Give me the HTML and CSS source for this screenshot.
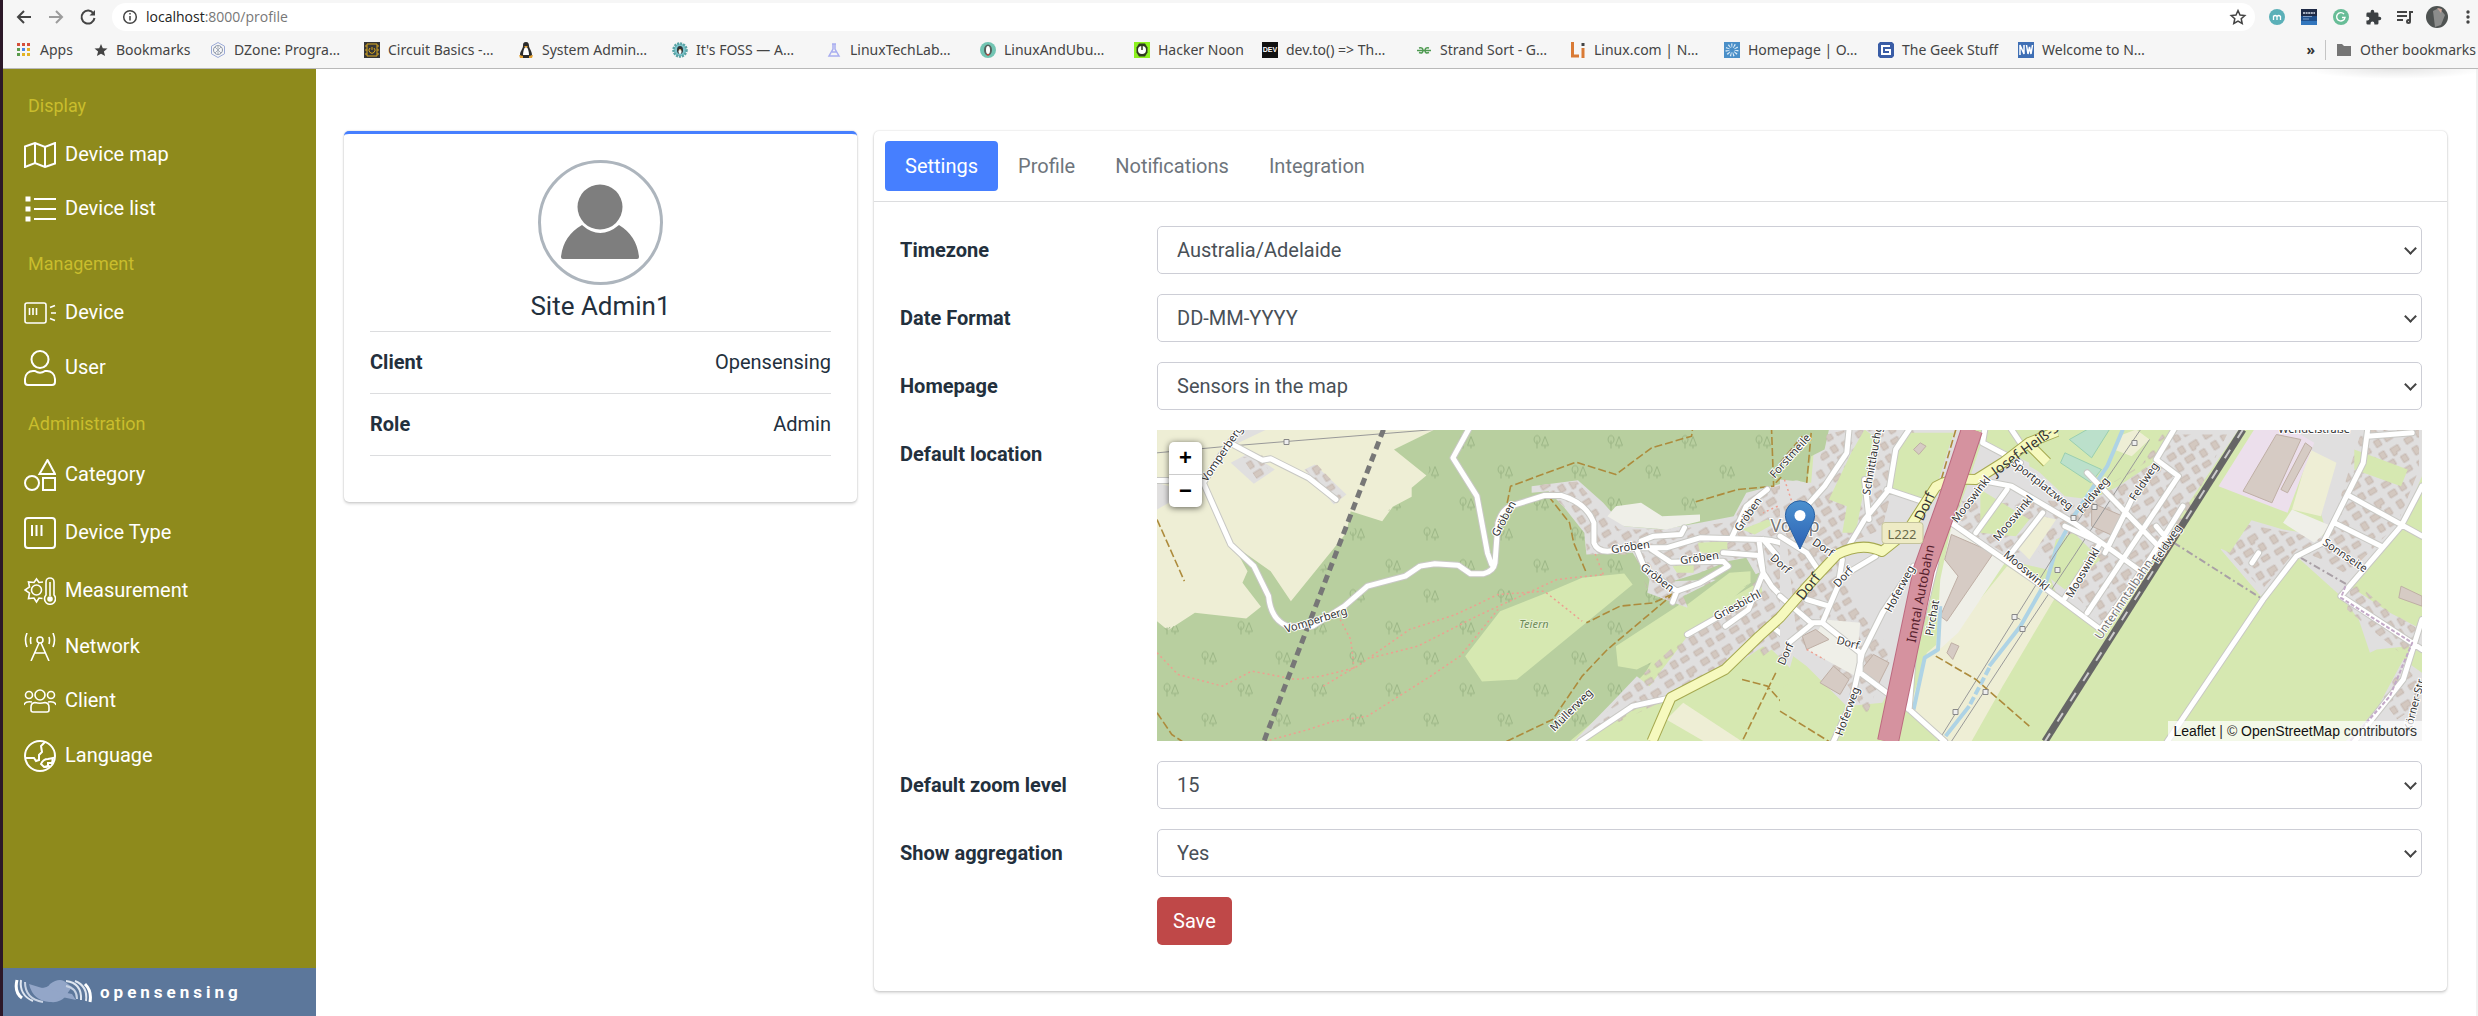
FILE: index.html
```html
<!DOCTYPE html>
<html lang="en">
<head>
<meta charset="utf-8">
<title>Profile</title>
<link rel="stylesheet" href="styles.css">
</head>
<body>
<header class="browser">
  <div class="toolbar">
    <button class="tool" aria-label="Back"><svg width="18" height="18" viewBox="0 0 18 18" class="ln"><path d="M16 9H3M9 3L3 9l6 6"/></svg></button>
    <button class="tool faded" aria-label="Forward"><svg width="18" height="18" viewBox="0 0 18 18" class="ln"><path d="M2 9h13M9 3l6 6-6 6"/></svg></button>
    <button class="tool" aria-label="Reload"><svg width="18" height="18" viewBox="0 0 18 18" class="ln"><path d="M14.500 5.500A6.500 6.500 0 1 0 15.500 10"/><path d="M16 2v5.500h-5.500z" fill="#444" stroke="none"/></svg></button>
    <div class="omnibox">
      <svg width="16" height="16" viewBox="0 0 16 16" class="ln thin"><circle cx="8" cy="8" r="6.300"/><path d="M8 7v4.500M8 4v1.600"/></svg>
      <span class="url"><b>localhost</b>:8000/profile</span>
      <svg width="18" height="18" viewBox="0 0 18 18" class="ln thin"><path d="M9 2.500l2 4.500 4.800.5-3.600 3.200 1 4.800L9 13l-4.200 2.500 1-4.800L2.200 7.500 7 7z"/></svg>
    </div>
    <button class="tool" aria-label="m extension"><svg width="16" height="16" viewBox="0 0 16 16"><circle cx="8" cy="8" r="8" fill="#5bb0b8"/><path d="M4.500 11V6.500M4.500 7.500q1.700-2 3.500 0V11M8 7.500q1.700-2 3.500 0V11" fill="none" stroke="#fff" stroke-width="1.300"/></svg></button>
    <button class="tool" aria-label="Dictionary"><svg width="16" height="16" viewBox="0 0 16 16"><path d="M0 0h16v16H0z" fill="#1f2b47"/><path d="M0 7h16v9H0z" fill="#20508c"/><path d="M0 12h16v4H0z" fill="#3276bd"/><path d="M2 4h12" stroke="#a9b2c2" stroke-width="2" stroke-dasharray="2 .6"/><path d="M2 7.500h9M2 10h6" stroke="#7d9cc6"/></svg></button>
    <button class="tool" aria-label="Grammar"><svg width="16" height="16" viewBox="0 0 16 16"><circle cx="8" cy="8" r="8" fill="#68bd97"/><path d="M11 5a4.200 4.200 0 1 0 1 3.500H9" fill="none" stroke="#fff" stroke-width="1.400"/></svg></button>
    <button class="tool" aria-label="Extensions"><svg width="17" height="17" viewBox="0 0 24 24"><path fill="#3c4043" d="M20.500 11H19V7a2 2 0 0 0-2-2h-4V3.500a2.500 2.500 0 0 0-5 0V5H4a2 2 0 0 0-2 2v3.800h1.500a2.700 2.700 0 0 1 0 5.400H2V20a2 2 0 0 0 2 2h3.800v-1.500a2.700 2.700 0 0 1 5.400 0V22H17a2 2 0 0 0 2-2v-4h1.500a2.500 2.500 0 0 0 0-5z"/></svg></button>
    <button class="tool" aria-label="Media"><svg width="18" height="18" viewBox="0 0 18 18" class="ln"><path d="M1 4h10M1 8h10M1 12h6M14 13V4h3"/><circle cx="12.500" cy="13.500" r="1.500"/></svg></button>
    <button class="tool" aria-label="Account"><svg width="22" height="22" viewBox="0 0 22 22"><circle cx="11" cy="11" r="11" fill="#4f5352"/><path d="M7 5l6-3 6 7-4 10-6 2z" fill="#8b8c8b"/><path d="M11 2l5 1-1 4z" fill="#c9a59a"/></svg></button>
    <button class="tool last" aria-label="Menu"><svg width="6" height="18" viewBox="0 0 6 18" fill="#444"><circle cx="3" cy="4" r="1.700"/><circle cx="3" cy="9" r="1.700"/><circle cx="3" cy="14" r="1.700"/></svg></button>
  </div>
  <nav class="bookmarks">
    <a href="#" class="bm bm-apps"><svg width="16" height="16" viewBox="0 0 16 16"><path fill="#d5503b" d="M1 1h3v3H1zM6 1h3v3H6zM11 1h3v3h-3z"/><path fill="#5b9b4c" d="M1 6h3v3H1zM1 11h3v3H1z"/><path fill="#4a86e8" d="M6 6h3v3H6z"/><path fill="#e3b326" d="M11 6h3v3h-3zM6 11h3v3H6zM11 11h3v3h-3z"/></svg>Apps</a>
    <a href="#" class="bm bm-own"><svg width="14" height="16" viewBox="0 0 14 16"><path fill="#444" d="M7 2l1.800 4.200 4.700.4-3.600 3 1.200 4.500L7 11.700l-4.100 2.400L4.100 9.600.5 6.600l4.700-.4z"/></svg>Bookmarks</a>
    <a href="#" class="bm"><svg width="16" height="16" viewBox="0 0 16 16" fill="none" stroke="#9aa9d6"><path d="M8 .5l6.500 3.700v7.600L8 15.500l-6.500-3.700V4.200z"/><circle cx="8" cy="8" r="4.500" stroke="#8c96a8"/><path d="M5 5l6 6M11 5l-6 6M8 3v10" stroke="#a5adb9"/></svg>DZone: Progra…</a>
    <a href="#" class="bm"><svg width="16" height="16" viewBox="0 0 16 16"><path fill="#363636" d="M0 0h16v16H0z"/><path fill="none" stroke="#d8a820" d="M3 2h10v12H3zM1 4h2M1 8h2M1 12h2M13 4h2M13 8h2M13 12h2M6 6a3 3 0 1 0 4 0M8 5v3"/></svg>Circuit Basics -…</a>
    <a href="#" class="bm"><svg width="16" height="16" viewBox="0 0 16 16"><path fill="#2c2c2c" d="M8 0c2.500 0 3 2 3 4s3 5 3 9l-2 3H4l-2-3c0-4 3-6 3-9s.5-4 3-4z"/><path fill="#fff" d="M8 5c2 0 3 5 3 8H5c0-3 1-8 3-8z"/><path fill="#e3a02f" d="M6 4h4L8 6zM1 13l4 1v2H2zM15 13l-4 1v2h3z"/></svg>System Admin…</a>
    <a href="#" class="bm"><svg width="16" height="16" viewBox="0 0 16 16"><circle cx="8" cy="8" r="6.500" fill="#7cc4cc" stroke="#59a3a4" stroke-width="2.500" stroke-dasharray="2 1"/><ellipse cx="8" cy="8" rx="3" ry="4" fill="#2e3133"/><ellipse cx="8" cy="9.500" rx="1.500" ry="2.500" fill="#fff"/><path d="M7 7h2L8 9z" fill="#e8a33b"/></svg>It's FOSS — A…</a>
    <a href="#" class="bm"><svg width="16" height="16" viewBox="0 0 16 16" fill="none" stroke="#a9aef0" stroke-width="1.500"><path d="M6 2h4M7 2v5l-4 7h10L9 7V2M6 10h5"/></svg>LinuxTechLab…</a>
    <a href="#" class="bm"><svg width="16" height="16" viewBox="0 0 16 16"><circle cx="8" cy="8" r="8" fill="#72c5b3"/><ellipse cx="8" cy="8" rx="4" ry="5.500" fill="#56605c"/><ellipse cx="8" cy="8" rx="2" ry="4" fill="#fff"/><path d="M6 12h4l-2 2z" fill="#c2443a"/></svg>LinuxAndUbu…</a>
    <a href="#" class="bm bm-noon"><svg width="16" height="16" viewBox="0 0 16 16"><path fill="#8df21e" d="M0 0h16v16H0z"/><path d="M5 1.500h6l2.500 4v5l-2.500 4H5l-2.500-4v-5z" fill="#2f3b20"/><circle cx="8" cy="8" r="4" fill="#fff"/><path d="M8 3v5" stroke="#2f3b20" stroke-width="1.500"/></svg>Hacker Noon</a>
    <a href="#" class="bm"><span class="dev">DEV</span>dev.to() =&gt; Th…</a>
    <a href="#" class="bm"><svg width="16" height="16" viewBox="0 0 16 16" fill="none" stroke="#4e9a51" stroke-width="1.500"><path d="M3 6q4-1 4 2.500Q7 12 3 10.500M13 6q-4-1-4 2.500Q9 12 13 10.500M1 8.500h14"/></svg>Strand Sort - G…</a>
    <a href="#" class="bm"><svg width="16" height="16" viewBox="0 0 16 16" stroke="#d97a35" stroke-width="3" fill="none"><path d="M2.500 0v14H9M13 6v10"/><path d="M13 1v3" stroke="#444"/></svg>Linux.com | N…</a>
    <a href="#" class="bm"><svg width="16" height="16" viewBox="0 0 16 16"><path fill="#4a8fc8" d="M0 0h16v16H0z"/><circle cx="8" cy="8" r="4.500" fill="none" stroke="#dcecf8" stroke-width="4" stroke-dasharray="1 1.500"/></svg>Homepage | O…</a>
    <a href="#" class="bm bm-geek"><svg width="16" height="16" viewBox="0 0 16 16"><path fill="#3a5da6" d="M0 2l2-2h12l2 2v12l-2 2H2l-2-2z"/><path d="M12 4H4v8h8V8H7" fill="none" stroke="#fff" stroke-width="2"/></svg>The Geek Stuff</a>
    <a href="#" class="bm"><svg width="16" height="16" viewBox="0 0 16 16"><path fill="#3f6fb5" d="M0 0h16v16H0z"/><path d="M2 13V3l4 9V3M8.500 3l1.500 9 1.500-7 1.500 7 1.500-9" fill="none" stroke="#fff" stroke-width="1.500"/></svg>Welcome to N…</a>
    <button class="more" aria-label="More bookmarks">»</button>
    <a href="#" class="bm bm-other"><svg width="16" height="16" viewBox="0 0 16 16"><path fill="#757575" d="M1 2h5l2 2h7v10H1z"/></svg>Other bookmarks</a>
  </nav>
</header>

<div class="app">
  <aside class="sidebar">
    <nav class="menu">
      <h2>Display</h2>
      <a href="#"><svg width="32" height="26" viewBox="0 0 32 26"><path d="M1 4.500L11 1l10 4 10-4v20.500L21 25l-10-4L1 25zM11 1v20M21 5v20"/></svg><span>Device map</span></a>
      <a href="#"><svg width="32" height="28" viewBox="0 0 32 28"><path d="M10 4h22M10 14h22M10 24h22"/><path d="M1.500 1.500h5v5h-5zM1.500 11.500h5v5h-5zM1.500 21.500h5v5h-5z" fill="#fff" stroke="none"/></svg><span>Device list</span></a>
      <h2>Management</h2>
      <a href="#"><svg width="32" height="22" viewBox="0 0 32 22" class="fine"><rect x="1" y="1" width="21" height="20" rx="2"/><path d="M5.500 6v7M9 6v7M12.500 6v7M26 5.500l5-2M27 11h5M26 16.500l5 2"/></svg><span>Device</span></a>
      <a href="#" class="mid"><svg width="32" height="36" viewBox="0 0 32 36"><circle cx="16" cy="9.500" r="8.500"/><path d="M1 32v-3c0-5 4-8 8-8h2c3 2 7 2 10 0h2c4 0 8 3 8 8v3q0 3-3 3H4q-3 0-3-3z"/></svg><span>User</span></a>
      <h2>Administration</h2>
      <a href="#" class="tall"><svg width="32" height="32" viewBox="0 0 32 32"><circle cx="8" cy="24" r="7"/><path d="M19 19h12v12H19zM23.500 1l7.500 14H15.500z"/></svg><span>Category</span></a>
      <a href="#" class="tall"><svg width="32" height="32" viewBox="0 0 32 32"><rect x="1" y="1" width="30" height="30" rx="3"/><path d="M8 8v11M12.500 8v11M17.500 8v11"/></svg><span>Device Type</span></a>
      <a href="#" class="tall"><svg width="32" height="28" viewBox="0 0 32 28" class="fine"><circle cx="12.500" cy="13" r="5"/><path d="M19 5l-4 .5L12.500 2 10 5.500 4.500 5l1 5L1 13l4.500 3-1 5.500 5.500-.5 2.500 4 2.500-4 3.500.5"/><path d="M22 18V5a4 4 0 0 1 8 0v13a5.500 5.500 0 1 1-8 0zM26 5v14"/><circle cx="26" cy="22" r="2" fill="#fff"/></svg><span>Measurement</span></a>
      <a href="#"><svg width="32" height="28" viewBox="0 0 32 28" class="fine"><circle cx="16" cy="7" r="3"/><path d="M15 10L7 28M17 10l8 18M11 20h10M3 0q-3 7 0 14M29 0q3 7 0 14M7 4q-1 3 0 7M25 4q1 3 0 7"/></svg><span>Network</span></a>
      <a href="#"><svg width="32" height="24" viewBox="0 0 32 24" class="fine"><circle cx="16" cy="6" r="5"/><circle cx="5" cy="6" r="3.500"/><circle cx="27" cy="6" r="3.500"/><path d="M7 21v-3q0-4 4-4.500 5 1.500 10 0 4 .5 4 4.500v3q0 2-2 2H9q-2 0-2-2zM0 16q1-4 8-3M32 16q-1-4-8-3"/></svg><span>Client</span></a>
      <a href="#" class="mid"><svg width="32" height="32" viewBox="0 0 32 32"><circle cx="16" cy="16" r="15"/><path d="M21 2l-4 4 1 6-3 3v5l-3 1-2-3H2M17 24q2-5 7-5l5-1-1 5h-4v3l-4 1zM22 27l4-1"/></svg><span>Language</span></a>
    </nav>
    <footer class="brand">
      <svg width="78" height="26" viewBox="0 0 78 26"><path d="M26 9q8 0 10-4 8-6 14-3l8 6q-4 5-6 9-6 7-15 6-9-1-11-14z" fill="#93a6c8"/><path d="M15 5l13 4 30 6 4 6-14-3-12 5q-17-1-21-18z" fill="#93a6c8"/><g fill="none" stroke="#fff" stroke-width="2"><path d="M3 1q-3 12 5 18" stroke-width="3"/><path d="M7 1q-2 15 12 21" stroke="#dfe6f0"/><path d="M11 3q0 17 18 20" stroke="#c8d3e4"/><path d="M71 5q7 7 5 18" stroke-width="3"/><path d="M61 2q13 5 11 20" stroke="#dfe6f0"/><path d="M52 2q16 2 15 19" stroke="#dfe6f0"/><path d="M52 7q11 2 11 13" stroke="#c8d3e4"/></g></svg>
      <span>opensensing</span>
    </footer>
  </aside>

  <main class="content">
    <section class="card person">
      <svg class="avatar" viewBox="0 0 119 119"><circle cx="59" cy="44" r="22.500" fill="#7e7e7e"/><path fill="#7e7e7e" d="M41 62q18 16 37 0 18 11 20 32 0 2-2 2H22q-2 0-2-2 2-21 21-32z"/></svg>
      <h1>Site Admin1</h1>
      <dl>
        <div><dt>Client</dt><dd>Opensensing</dd></div>
        <div><dt>Role</dt><dd>Admin</dd></div>
      </dl>
    </section>

    <section class="card settings">
      <div class="tabs" role="tablist">
        <button role="tab" class="active" aria-selected="true">Settings</button>
        <button role="tab">Profile</button>
        <button role="tab">Notifications</button>
        <button role="tab">Integration</button>
      </div>
      <form class="form" onsubmit="return false">
        <label for="tz">Timezone</label>
        <div class="field"><select id="tz"><option>Australia/Adelaide</option></select></div>
        <label for="df">Date Format</label>
        <div class="field"><select id="df"><option>DD-MM-YYYY</option></select></div>
        <label for="hp">Homepage</label>
        <div class="field"><select id="hp"><option>Sensors in the map</option></select></div>
        <span class="label">Default location</span>
        <div class="map">
          <svg class="tiles" viewBox="0 0 1265 312" preserveAspectRatio="xMidYMid slice">
            <defs>
              <pattern id="trees" width="74" height="62" patternUnits="userSpaceOnUse">
                <path fill="none" stroke="#9bb585" d="M10 19v-8M10 14a3 4 0 1 1 .1 0M18 19v-3M14.500 16L18 7l3.500 9zM48 49v-8M48 44a3 4 0 1 1 .1 0M56 49v-3M52.500 46l3.500-9 3.500 9z"/>
              </pattern>
              <pattern id="houses" width="42" height="37" patternUnits="userSpaceOnUse" patternTransform="rotate(-32)">
                <path fill="#d3c8c0" stroke="#bfafa5" stroke-width=".7" d="M2 3h8v6H2zM15 2h6v7h-6zM27 4h9v6h-5v2h-4zM4 15h6v8H4zM16 14h9v6h-9zM32 16h6v7h-6zM1 29h9v5H1zM17 26h6v7h-6zM28 28h8v5h-8z"/>
              </pattern>
              <linearGradient id="pinfill" x2="0" y2="1"><stop stop-color="#4b90cf"/><stop offset="1" stop-color="#2c62b4"/></linearGradient>
              <path id="west" vector-effect="non-scaling-stroke" d="M220 75L290 122 310 118 400 175 465 240M235 30L190 110 150 190 215 375 270 440 305 530Q310 600 350 620L410 620 485 560 540 500 630 470 665 440 700 433 755 437 785 463H815Q840 455 843 430L850 310Q860 270 880 260L960 228H1000Q1060 250 1078 310V370Q1085 395 1110 395L1180 385 1250 385 1330 355 1480 360Q1530 365 1568 400M780 30L743 115 800 230 825 400 835 435M40 183H65M1180 390L1200 450 1275 515 1265 548M1275 515L1330 490 1397 440 1385 425 1260 428 1215 390M1190 365L1220 350 1285 345 1293 325M1385 400L1470 408 1480 460 1445 570 1390 620M1470 530L1390 580 1300 645M1405 355L1440 260 1490 210M1470 360L1480 460 1500 500 1568 590M1045 966L1170 860 1260 835M1500 620L1545 665 1568 640M1480 360L1568 490"/>
              <path id="east" vector-effect="non-scaling-stroke" d="M155 30L150 100 100 200 60 260M290 30L260 90 245 210 190 300 150 390M240 210L330 250M200 300L190 180M385 310L590 500 720 630M400 170L520 200 660 310 805 450M510 210L440 340M590 280L520 400M885 30L845 120 895 170 760 440 690 580M640 320L720 370 640 535M790 240L730 400M690 160L850 380M905 260L830 420 720 630M845 320L870 360M1320 30L1310 130 1220 370 1160 410 1085 540 870 966M1420 40L1320 50M1442 200L1395 320 1260 530M1280 230L1442 350M1245 310L1350 380M1260 530L1442 690M1442 600L1400 780 1290 966M1060 430L1075 400M0 350L60 400 85 450M140 420L130 500 95 610 180 700 180 760 290 870 370 966M215 410L140 470M0 530L70 610H95M60 540L110 560M20 670L75 610M300 440L230 580 185 700 160 850 120 966M350 430L300 700 290 870M460 30L455 70 540 130M520 30L540 70"/>
              <path id="trunk" d="M495 312L514 268 568 240 602 207 623 188 650 157 680 125Q705 112 725 122L750 102 779 57Q792 48 819 50L846 33 872 13 900 2M872 15L890 33"/>
            </defs>
            <path fill="#d6e8b1" d="M0 0h1265v312H0z"/>
            <!-- western half -->
            <g transform="translate(-16.800 -10) scale(.4209 .3333)">
              <path fill="#b8cf9f" d="M40 30H1568V230L1480 480 1250 650 1200 760 1130 850 1020 966H40z"/>
              <path fill="#eeeed5" d="M40 30H700L603 90 680 168 645 205V232L600 262 575 305 500 275 490 340 358 545 310 455 220 375 255 455 243 490 287 562 252 597 130 580 66 632 40 605z"/>
            </g>
            <path fill="url(#trees)" d="M275 0H640V70L600 150 510 205 470 275 412 312H0V200L40 192 100 185 140 170 195 100 270 60z"/>
            <g transform="translate(-16.800 -10) scale(.4209 .3333)">
              <path fill="#d6e8b1" d="M772 710L855 575 975 515 1050 475 1150 462 1170 495 895 780 812 786zM1130 680L1300 540 1420 450H1455L1450 490 1260 700 1180 750 1135 740z"/>
              <path fill="#e0dfdf" d="M930 200L1040 182 1100 250 1150 320 1240 330 1330 310 1410 290 1440 220 1530 190 1568 180V640L1540 760 1480 680 1400 750 1270 830 1200 860 1140 880 1060 966H1030L1120 850 1180 770 1210 800 1300 650 1480 530 1470 460 1300 565 1205 520 1210 480 1170 400 1060 405 1055 340 1005 260 970 215 930 220zM215 130L260 100 320 150 270 193zM390 150L415 135 490 225 460 255zM40 190L68 200V250L40 270zM235 30H300L225 75z"/>
            </g>
            <path fill="url(#houses)" d="M375 56L420 52 462 100 520 100 575 92 592 65 643 50V205L628 235 600 225 520 265 425 310 480 250 530 205 603 165 590 148 525 178 490 160 478 125 430 125 428 102 405 75zM85 28L105 25 113 45 100 50zM148 40L160 35 188 65 180 72z"/>
            <g transform="translate(-16.800 -10) scale(.4209 .3333)" class="geo">
              <path fill="#efefe8" d="M1110 290L1130 260 1190 250 1240 290 1330 285V305L1250 330 1150 320z"/>
              <path fill="#b8cf9f" d="M1265 485L1330 460 1395 425 1440 415 1465 470 1440 500 1400 510 1300 560 1290 530 1370 480z"/>
              <path fill="#d6e8b1" d="M1325 370L1395 365V400H1330zM1265 440L1315 430V460H1275zM1300 555L1400 460 1450 455V490L1380 545 1300 580zM1430 330L1490 300 1510 310 1460 345zM1470 720L1500 690 1540 740 1568 780V966H1430L1290 850 1400 750z"/>
              <path fill="#eeeed5" d="M1290 850L1430 966H1340L1250 900z"/>
              <path class="brown" d="M872 250L880 200 1035 128 1130 165 1215 85 1310 50 1312 30M970 230L1020 310 1030 370 1060 460M870 966L980 900 1050 770 1110 690 1270 520 1220 550 1140 560 1060 610M40 300L105 485M1320 247L1420 210 1505 200 1500 30M1510 190L1568 110M40 880L75 945 100 966M1430 780L1490 800 1568 910M1510 760L1430 966"/>
              <path class="pink" d="M40 700L90 765 195 800 265 755 370 780 430 770 510 745 640 630 750 585 850 525 960 515 1050 605M475 600L500 660 508 745 435 800M550 715L660 680 800 590 990 480 1100 465M296 966L400 930 460 905 540 890 690 770 760 710 850 570M1100 465L1080 400M1530 190L1550 240 1480 280"/>
              <path class="power" d="M40 100L210 80 700 30"/>
              <use href="#west" class="road-c"/><use href="#west" class="road"/>
              <path class="border" d="M578 30L300 945 294 966"/>
            </g>
            <!-- eastern half -->
            <g transform="translate(623 -10) scale(.4452 .3333)" class="geo">
              <path fill="#e0dfdf" d="M0 180L70 190 80 30H420L360 320 250 800 230 850 150 860 60 740 0 680zM455 60L560 130 640 230 700 240 760 200 850 120 880 30H1030L720 640 620 520 600 450 500 420 390 310 420 200zM1160 30H1442V170L1395 320 1280 500 1370 580 1442 630V700L1410 680 1340 690 1325 700 1300 600 1260 530 1160 410 1080 530 990 390 1040 295 1130 330 1230 350zM1340 870L1400 720 1442 760V966H1270z"/>
              <path fill="#b8cf9f" d="M0 30H110L100 90 70 110 60 190 0 170z"/>
            </g>
            <path fill="url(#houses)" d="M626 75L655 55 670 5 690 0H760L740 40 725 100 700 110 680 130 700 180 735 220 710 285 680 240 640 210zM795 70L830 75 885 70 920 75 985 35 1005 5H1070L1035 75 1015 110 945 195 895 140 880 120 850 125 800 95zM1205 0H1262V40L1240 95 1190 145 1165 130 1140 120 1105 160 1068 120 1090 95 1170 110zM1195 150L1230 180 1262 200V220L1245 225 1190 180zM1225 270L1245 235 1262 250V275L1240 290z"/>
            <g transform="translate(623 -10) scale(.4452 .3333)" class="geo">
              <path fill="#d6e8b1" d="M280 40H390L340 250 250 205 262 110zM160 100L190 30 220 60 190 200 170 340 140 340 150 260 110 240zM450 210L560 300 530 350 450 340zM1290 90L1410 150 1395 200 1290 150zM620 360L660 340 720 420 640 510 600 470zM0 810L40 770 130 860V966H0zM940 240L1060 300 1010 400 900 330zM560 90L640 100 700 200 690 240 560 140z"/>
              <path fill="#eeeed5" d="M510 440L620 530 500 800 430 966H370L290 870 330 700 400 620zM1190 90L1250 130 1215 290 1150 270zM590 290L620 300 560 420 530 380zM760 50L800 30 830 60 790 110 750 90z"/>
              <path fill="#ecdfec" d="M1065 30H1150L1200 70 1140 280 985 200z"/>
              <path fill="#efefe8" d="M385 320L510 420 400 640 350 700 360 480zM100 600L180 610 170 770 60 690zM1150 270L1240 320 1200 370 1130 310z"/>
              <path fill="#bbe0cb" stroke="#9acfb0" d="M650 60L690 30H740L700 115zM640 100L722 150 698 190 630 130z"/>
              <path fill="#d6cbc4" stroke="#bfafa5" d="M1115 45L1170 60 1105 250 1040 215zM385 345L480 400 375 605 360 590 400 470 370 420zM1180 70L1195 85 1140 220 1125 210zM180 755L210 705 245 730 215 810zM700 250L770 290 750 350 700 320zM375 700L385 670 402 680 388 720zM120 740L155 780 135 825 90 790zM1395 500L1442 530V560L1390 535zM50 650L80 630 110 660 60 690zM300 90L315 70 328 80 312 105z"/>
              <path class="river" d="M770 30L735 140 660 290 620 390 600 480 540 620 470 740"/><path class="river wet" d="M470 745L425 860"/><path class="river" d="M425 860L372 950M360 560L355 690 325 715 300 870"/>
              <path class="power" d="M810 30L620 400 355 966M830 60L660 410 545 640 385 966M540 600L525 590"/>
              <path class="brown" d="M350 710L440 780 560 920M0 875L110 966M395 30L360 190M70 40L60 190M0 130L50 50"/>
              <path class="pink" d="M10 180L40 300M60 690L100 720"/>
              <path class="dash" d="M885 370L1085 540M1170 415L1280 500"/>
              <path class="lilac" d="M1160 415L1120 480 1090 540"/>
              <use href="#east" class="road-c"/><use href="#east" class="road"/>
              <path class="lilac" d="M1270 500L1260 535 1420 670 1370 830 1280 966"/>
              <path class="rail" d="M1040 30L595 966"/><path class="rail-in" d="M1040 30L595 966"/>
            </g>
            <use href="#trunk" class="main-c"/><use href="#trunk" class="main"/>
            <g fill="none"><path stroke="#bd6b80" stroke-width="22" d="M815 0L792 70 767 140 731 312"/><path stroke="#d5929f" stroke-width="20" d="M815 0L792 70 767 140 731 312"/></g>
            <path fill="#eee" stroke="#888" d="M127 10h5v5h-5zM975 11h5v5h-5zM935 75h5v5h-5zM914 86h5v5h-5zM898 138h5v5h-5zM855 185h5v5h-5zM863 197h5v5h-5zM826 260h5v5h-5zM796 280h5v5h-5z"/>
            <rect x="725" y="93" width="41" height="21" rx="3" fill="#eeebc5" stroke="#c4c39c"/>
            <g class="names">
              <text transform="translate(68 26) rotate(-56)">Vomperberg</text>
              <text transform="translate(160 194) rotate(-17)">Vomperberg</text>
              <text transform="translate(350 91) rotate(-62)">Gröben</text>
              <text transform="translate(474 121) rotate(-8)">Gröben</text>
              <text transform="translate(543 132) rotate(-8)">Gröben</text>
              <text transform="translate(498 151) rotate(38)">Gröben</text>
              <text transform="translate(594 87) rotate(-55)">Gröben</text>
              <text transform="translate(582 179) rotate(-28)">Griesbichl</text>
              <text transform="translate(417 283) rotate(-45)">Müllerweg</text>
              <text class="wood" transform="translate(377 198)">Teiern</text>
              <text transform="translate(636 29) rotate(-48)">Forstmeile</text>
              <text class="town" transform="translate(638 102)">Vomp</text>
              <text transform="translate(621 137) rotate(42)">Dorf</text>
              <text transform="translate(632 226) rotate(-65)">Dorf</text>
              <text transform="translate(664 121) rotate(35)">Dorf</text>
              <text transform="translate(689 150) rotate(-48)">Dorf</text>
              <text transform="translate(690 217) rotate(15)">Dorf</text>
              <text class="big" transform="translate(655 160) rotate(-52)">Dorf</text>
              <text class="big" transform="translate(772 79) rotate(-65)">Dorf</text>
              <text class="ref" transform="translate(745 109)">L222</text>
              <text transform="translate(721 20) rotate(-80)">Schnittlauchgasse</text>
              <text transform="translate(746 161) rotate(-62)">Hoferweg</text>
              <text transform="translate(694 283) rotate(-70)">Hoferweg</text>
              <text class="motor" transform="translate(768 165) rotate(-79)">Inntal Autobahn</text>
              <text transform="translate(779 189) rotate(-80)">Pirchat</text>
              <text class="big" transform="translate(876 20) rotate(-36)">Josef-Heiß-Str.</text>
              <text transform="translate(883 58) rotate(38)">Sportplatzweg</text>
              <text transform="translate(939 68) rotate(-50)">Feldweg</text>
              <text transform="translate(990 54) rotate(-56)">Feldweg</text>
              <text transform="translate(1013 116) rotate(-56)">Feldweg</text>
              <text transform="translate(817 72) rotate(-52)">Mooswinkl</text>
              <text transform="translate(859 91) rotate(-50)">Mooswinkl</text>
              <text transform="translate(867 144) rotate(40)">Mooswinkl</text>
              <text transform="translate(929 145) rotate(-60)">Mooswinkl</text>
              <text class="line" transform="translate(970 172) rotate(-56)">Unterinntalbahn</text>
              <text transform="translate(1186 129) rotate(34)">Sonnseite</text>
              <text transform="translate(1157 3)">Wendelstraße</text>
              <text transform="translate(1261 276) rotate(-75)">Körner-Str.</text>
            </g>
          </svg>
          <svg class="pin" width="31" height="50" viewBox="0 0 31 50"><path d="M15.500 49L4 25Q.8 20 .8 15.500a14.700 14.700 0 0 1 29.400 0Q30.200 20 27 25z" fill="url(#pinfill)" stroke="#2b62a3"/><circle cx="15.500" cy="15.500" r="5.500" fill="#fff"/></svg>
          <div class="zoom"><button type="button" aria-label="Zoom in">+</button><button type="button" aria-label="Zoom out">−</button></div>
          <div class="credit"><a href="#">Leaflet</a> | © <a href="#">OpenStreetMap</a> contributors</div>
        </div>
        <label for="zl">Default zoom level</label>
        <div class="field"><select id="zl"><option>15</option></select></div>
        <label for="ag">Show aggregation</label>
        <div class="field"><select id="ag"><option>Yes</option></select></div>
        <button type="submit" class="save">Save</button>
      </form>
    </section>
  </main>
</div>
</body>
</html>
```

FILE: styles.css
```css
* { box-sizing: border-box; }
body { margin: 0; min-height: 100vh; display: flex; flex-direction: column; border-left: 3px solid #2c1828; background: #fff; color: #23303d; font: 20px/30px Roboto, sans-serif; }
button, select { font: inherit; }
a { color: inherit; text-decoration: none; }
h1, h2, dl, dd { margin: 0; font-weight: 400; }

.browser { background: #f6f6f6; border-bottom: 1px solid #b9b9b9; color: #444; font: 14px/20px "Noto Sans", sans-serif; }
.toolbar { display: flex; align-items: center; padding: 3px 0 3px 5px; }
.tool { width: 32px; height: 28px; flex: none; padding: 0; border: 0; background: none; display: flex; align-items: center; justify-content: center; }
.tool.last { width: 20px; margin-left: 5px; }
.faded { opacity: .5; }
.ln { fill: none; stroke: #444; stroke-width: 2; }
.thin { stroke-width: 1.5px; }
.omnibox { flex: 1; height: 28px; margin: 0 6px 0 8px; padding: 0 8px 0 10px; border-radius: 14px; background: #fff; display: flex; align-items: center; gap: 8px; color: #777; font-family: "Open Sans", sans-serif; }
.omnibox b { font-weight: 400; color: #222; }
.url { flex: 1; }
.bookmarks { display: flex; align-items: center; height: 34px; padding: 0 2px 2px 13px; gap: 24px; }
.bm { width: 130px; flex: none; display: flex; align-items: center; gap: 8px; white-space: nowrap; }
.bm svg { flex: none; }
.bm-apps { width: 54px; }
.bm-own { width: 92px; }
.bm-noon { width: 104px; }
.bm-geek { width: 116px; }
.dev { width: 16px; height: 16px; flex: none; overflow: hidden; background: #111; color: #fff; font: 700 7px/16px "Liberation Sans", sans-serif; text-align: center; }
.more { margin-left: auto; padding: 0; border: 0; background: none; color: #333; font-weight: 700; }
.bm-other { width: auto; margin-left: -14px; padding-left: 10px; border-left: 1px solid #c4c4c4; }

.app { flex: 1; display: flex; }
.sidebar { width: 313px; flex: none; display: flex; flex-direction: column; background: #8e8a1c; color: #fff; }
.menu { flex: 1; padding: 9px 20px 0 21px; }
.menu h2 { height: 50px; padding: 5px 0 0 4px; color: #c9bd2d; font-size: 18px; line-height: 46px; }
.menu a { height: 54px; display: flex; align-items: center; gap: 9px; }
.menu a.mid { height: 56px; }
.menu a.tall { height: 58px; }
.menu svg { fill: none; stroke: #fff; stroke-width: 2; }
.menu svg.fine { stroke-width: 1.6px; }
.menu span { padding-bottom: 3px; }
.brand { height: 48px; padding: 0 11px; display: flex; align-items: center; gap: 8px; background: #5c779b; font-size: 17px; font-weight: 700; letter-spacing: 4px; }

.content { flex: 1; display: grid; grid-template-columns: 513fr 1573fr; gap: 17px; align-items: start; padding: 62px 29px 24px 28px; border-right: 2px solid #f1f1f1; background: radial-gradient(ellipse 90px 10px at 2080px 0, rgba(0,0,0,.1), transparent); }
.card { border-radius: 5px; background: #fff; box-shadow: 0 0 2px rgba(0,0,0,.2), 0 2px 3px rgba(0,0,0,.15); }
.person { padding: 26px 26px 46px; border-top: 3px solid #467fff; display: flex; flex-direction: column; align-items: center; }
.avatar { width: 125px; height: 125px; border: 3px solid #adb5bd; border-radius: 50%; }
.person h1 { padding-bottom: 4px; font-size: 26px; line-height: 42px; }
.person dl { width: 100%; border-top: 1px solid #dcdddf; }
.person dl div { display: flex; justify-content: space-between; padding: 15px 0 16px; border-bottom: 1px solid #dcdddf; }
dt, .form label, .label { font-weight: 700; }

.tabs { display: flex; padding: 10px 11px; border-bottom: 1px solid #dcdddf; }
.tabs button { height: 50px; padding: 0 20px; border: 0; border-radius: 4px; background: none; color: #6e757c; }
.tabs .active { background: #467fff; color: #fff; }
.form { display: grid; grid-template-columns: 257px 1fr; gap: 20px 0; padding: 24px 25px 46px 26px; }
.form label, .label { line-height: 48px; }
.field { position: relative; }
.field::after { content: ""; position: absolute; right: 7px; top: 18px; width: 7px; height: 7px; border: solid #444; border-width: 0 2px 2px 0; transform: rotate(45deg); pointer-events: none; }
select { display: block; width: 100%; height: 48px; padding: 0 19px; appearance: none; border: 1px solid #cdced6; border-radius: 5px; background: #fff; color: #495057; }
.save { grid-column: 2; justify-self: start; height: 48px; padding: 0 16px; border: 0; border-radius: 5px; background: #bf4848; color: #fff; }

.map { position: relative; height: 311px; overflow: hidden; }
.tiles { display: block; width: 100%; height: 100%; }
.geo path { vector-effect: non-scaling-stroke; }
.road, .road-c, .main, .main-c, .brown, .pink, .power, .border, .river, .dash, .lilac, .rail, .rail-in { fill: none; stroke-linejoin: round; }
.road { stroke: #fff; stroke-width: 5px; stroke-linecap: round; }
.road-c { stroke: #c8c8c4; stroke-width: 7px; stroke-linecap: round; }
.main { stroke: #f6f9be; stroke-width: 9px; }
.main-c { stroke: #a6a950; stroke-width: 11px; }
.brown { stroke: #ad8b3c; stroke-width: 1.6px; stroke-dasharray: 8 3; }
.pink { stroke: #ee9f90; stroke-width: 1.5px; stroke-dasharray: 2 3; }
.power { stroke: #999; stroke-width: 1px; }
.border { stroke: #777; stroke-width: 5px; stroke-dasharray: 8 5; }
.river { stroke: #aed3e5; stroke-width: 4px; }
.wet { stroke-dasharray: 8 3; }
.dash { stroke: #a9a0a6; stroke-width: 2px; stroke-dasharray: 7 3 2 3; }
.lilac { stroke: #c3aac8; stroke-width: 2px; stroke-dasharray: 4 2; }
.rail { stroke: #666; stroke-width: 7px; }
.rail-in { stroke: #ccc; stroke-width: 2px; stroke-dasharray: 10 14; }
.names { fill: #333; stroke: #fff; stroke-width: 2px; paint-order: stroke; text-anchor: middle; font: 11px "Noto Sans", sans-serif; }
.names .big { font-size: 14px; stroke: none; }
.names .town { fill: #777; font-size: 18px; }
.names .wood { fill: #6d8b57; font-style: italic; stroke: #e4efcf; }
.names .ref { fill: #6b6b4a; stroke: none; font-size: 13px; }
.names .motor { fill: #55202c; stroke: none; font-size: 13px; }
.names .line { fill: #777; font-size: 12px; }
.pin { position: absolute; left: 50.8%; top: 70px; transform: translateX(-50%); }
.zoom { position: absolute; left: 12px; top: 12px; width: 33px; border-radius: 5px; background: #fff; box-shadow: 0 1px 6px rgba(0,0,0,.6); }
.zoom button { display: block; width: 33px; height: 32px; padding: 0; border: 0; background: none; color: #000; font: 700 22px/32px "Liberation Sans", sans-serif; }
.zoom button + button { height: 33px; border-top: 1px solid #ccc; }
.credit { position: absolute; right: 0; bottom: 0; padding: 0 5px; background: rgba(255,255,255,.7); color: #333; font: 14px/20px "Liberation Sans", sans-serif; }
.credit a { color: #111; }
```
